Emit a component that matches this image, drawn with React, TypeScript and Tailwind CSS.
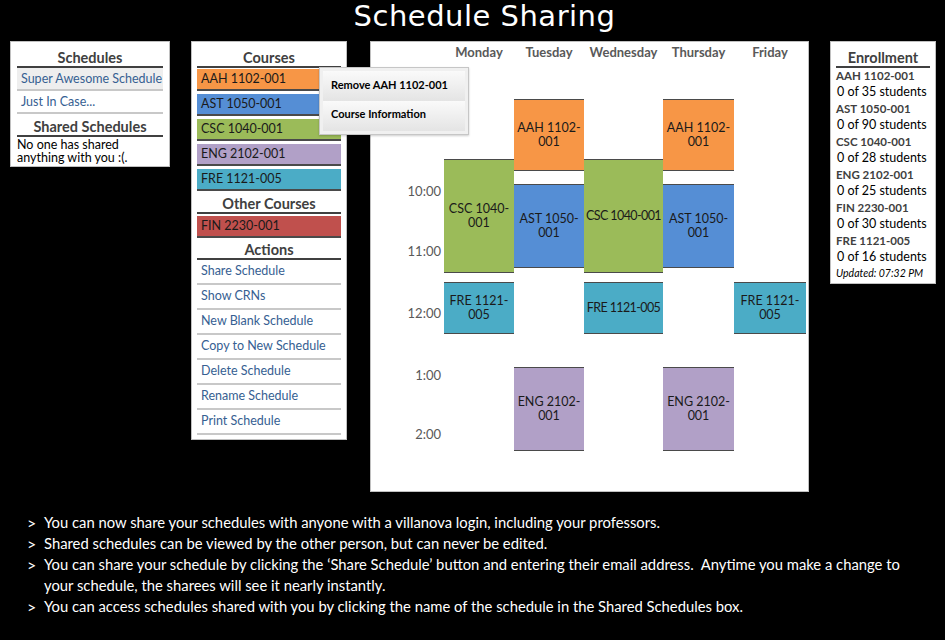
import React from 'react'

const font = { fontFamily: 'Lato, "Open Sans", sans-serif' }

const courses = [
  { code: 'AAH 1102-001', bg: 'bg-[#f79646]' },
  { code: 'AST 1050-001', bg: 'bg-[#558ed5]' },
  { code: 'CSC 1040-001', bg: 'bg-[#9bbb59]' },
  { code: 'ENG 2102-001', bg: 'bg-[#b1a0c7]' },
  { code: 'FRE 1121-005', bg: 'bg-[#4bacc6]' },
]

const actions = [
  'Share Schedule',
  'Show CRNs',
  'New Blank Schedule',
  'Copy to New Schedule',
  'Delete Schedule',
  'Rename Schedule',
  'Print Schedule',
]

const enrollment = [
  ['AAH 1102-001', '0 of 35 students'],
  ['AST 1050-001', '0 of 90 students'],
  ['CSC 1040-001', '0 of 28 students'],
  ['ENG 2102-001', '0 of 25 students'],
  ['FIN 2230-001', '0 of 30 students'],
  ['FRE 1121-005', '0 of 16 students'],
]

// column x (relative to calendar box) and widths
const cols = [
  { left: 73, width: 70 },
  { left: 143, width: 70 },
  { left: 213, width: 79 },
  { left: 292, width: 71 },
  { left: 363, width: 72 },
]

const events = [
  { col: 1, top: 57, h: 72, label: 'AAH 1102-\n001', bg: 'bg-[#f79646]' },
  { col: 3, top: 57, h: 72, label: 'AAH 1102-\n001', bg: 'bg-[#f79646]' },
  { col: 0, top: 117, h: 114, label: 'CSC 1040-\n001', bg: 'bg-[#9bbb59]' },
  { col: 2, top: 117, h: 114, label: 'CSC 1040-001', bg: 'bg-[#9bbb59]', tight: true },
  { col: 1, top: 142, h: 84, label: 'AST 1050-\n001', bg: 'bg-[#558ed5]' },
  { col: 3, top: 142, h: 84, label: 'AST 1050-\n001', bg: 'bg-[#558ed5]' },
  { col: 0, top: 240, h: 52, label: 'FRE 1121-\n005', bg: 'bg-[#4bacc6]' },
  { col: 2, top: 240, h: 52, label: 'FRE 1121-005', bg: 'bg-[#4bacc6]', tight: true },
  { col: 4, top: 240, h: 52, label: 'FRE 1121-\n005', bg: 'bg-[#4bacc6]' },
  { col: 1, top: 325, h: 84, label: 'ENG 2102-\n001', bg: 'bg-[#b1a0c7]' },
  { col: 3, top: 325, h: 84, label: 'ENG 2102-\n001', bg: 'bg-[#b1a0c7]' },
]

const days = ['Monday', 'Tuesday', 'Wednesday', 'Thursday', 'Friday']
const times: [string, number][] = [
  ['10:00', 150],
  ['11:00', 210],
  ['12:00', 272],
  ['1:00', 334],
  ['2:00', 393],
]

function Header({ children }: { children: React.ReactNode }) {
  return (
    <div className="border-b-2 border-[#404040] text-center text-[14.5px] font-bold leading-[16px] text-[#404040]">
      {children}
    </div>
  )
}

export default function App() {
  return (
    <div className="h-[640px] w-[945px] bg-black" style={font}>
      <div
        className="h-[41px] pl-[24px] text-center text-[29px] leading-[32px] text-white"
        style={{ fontFamily: '"DejaVu Sans", sans-serif', letterSpacing: '0.5px' }}
      >
        Schedule Sharing
      </div>

      <div className="flex items-start pl-[10px]">
        {/* Schedules */}
        <div className="w-[160px] border border-[#c0c0c0] bg-white px-[6px] pt-[8px] pb-[2px]">
          <Header>Schedules</Header>
          <div className="h-[23px] border-b-2 border-[#c8c8c8] bg-[#eeeeee] pl-[4px] text-[12.5px] leading-[21px] text-[#366092]">
            Super Awesome Schedule
          </div>
          <div className="h-[23px] border-b-2 border-[#c8c8c8] pl-[4px] text-[12.5px] leading-[21px] text-[#366092]">
            Just In Case...
          </div>
          <div className="pt-[5px]">
            <Header>Shared Schedules</Header>
          </div>
          <div className="pt-[1px] text-[12.5px] leading-[13px] text-black">
            No one has shared anything with you :(.
          </div>
        </div>

        {/* Courses */}
        <div className="relative ml-[21px] w-[156px] border border-[#c0c0c0] bg-white px-[5px] pt-[8px] pb-[4px]">
          <Header>Courses</Header>
          <div className="mt-[1px] flex flex-col gap-[3px]">
            {courses.map((c) => (
              <div
                key={c.code}
                className={`h-[22px] border-b-2 border-[#4a4a4a] pl-[4px] text-[12.5px] leading-[20px] text-[#1a1a1a] ${c.bg}`}
              >
                {c.code}
              </div>
            ))}
          </div>
          <div className="pt-[5px]">
            <Header>Other Courses</Header>
          </div>
          <div className="mt-[2px] h-[22px] border-b-2 border-[#4a4a4a] bg-[#c0504d] pl-[4px] text-[12.5px] leading-[20px] text-[#1a1a1a]">
            FIN 2230-001
          </div>
          <div className="pt-[4px]">
            <Header>Actions</Header>
          </div>
          <div className="flex flex-col">
            {actions.map((a) => (
              <div
                key={a}
                className="h-[25px] border-b-2 border-[#c8c8c8] pl-[4px] text-[12.5px] leading-[21px] text-[#366092]"
              >
                {a}
              </div>
            ))}
          </div>

          {/* context menu */}
          <div className="absolute top-[25px] left-[127px] z-10 w-[150px] border border-[#c6c6c6] bg-[#f0f0f0] p-[3px] shadow-[0_1px_2px_rgba(0,0,0,0.2)]">
            <div className="h-[30px] bg-gradient-to-b from-[#fafafa] to-[#e4e4e4] pl-[8px] text-[11px] font-bold leading-[28px] text-black">
              Remove AAH 1102-001
            </div>
            <div className="h-[30px] bg-gradient-to-b from-[#fafafa] to-[#e4e4e4] pl-[8px] text-[11px] font-bold leading-[26px] text-black">
              Course Information
            </div>
          </div>
        </div>

        {/* Calendar */}
        <div className="relative ml-[23px] h-[451px] w-[439px] border border-[#c0c0c0] bg-white">
          {days.map((d, i) => (
            <div
              key={d}
              className="absolute top-[1px] text-center text-[13px] font-bold text-[#595959]"
              style={{ left: cols[i].left, width: cols[i].width }}
            >
              {d}
            </div>
          ))}
          {times.map(([t, y]) => (
            <div
              key={t}
              className="absolute left-[0px] w-[70px] text-right text-[13px] leading-[16px] text-[#595959]"
              style={{ top: y - 9 }}
            >
              {t}
            </div>
          ))}
          {events.map((e, i) => (
            <div
              key={i}
              className={`absolute flex items-center justify-center border-y border-[#4a4a4a] text-center text-[12.5px] leading-[14px] whitespace-pre text-[#1a1a1a] ${e.bg} ${
                e.tight ? 'tracking-[-0.6px]' : ''
              }`}
              style={{ left: cols[e.col].left, width: cols[e.col].width, top: e.top, height: e.h }}
            >
              {e.label}
            </div>
          ))}
        </div>

        {/* Enrollment */}
        <div className="ml-[21px] w-[106px] border border-[#c0c0c0] bg-white px-[5px] pt-[8px] pb-[2px]">
          <Header>Enrollment</Header>
          <div>
            {enrollment.map(([c, s]) => (
              <div key={c}>
                <div className="text-[11.5px] leading-[15px] font-bold text-[#404040]">{c}</div>
                <div className="pl-[1px] text-[12.5px] leading-[18px] text-black">{s}</div>
              </div>
            ))}
            <div className="text-[10.5px] leading-[15px] italic text-black">Updated: 07:32 PM</div>
          </div>
        </div>
      </div>

      {/* Notes */}
      <div className="mt-[20px] pl-[27px] pr-[20px] text-[14.8px] leading-[21px] text-white">
        {[
          'You can now share your schedules with anyone with a villanova login, including your professors.',
          'Shared schedules can be viewed by the other person, but can never be edited.',
          'You can share your schedule by clicking the ‘Share Schedule’ button and entering their email address.  Anytime you make a change to your schedule, the sharees will see it nearly instantly.',
          'You can access schedules shared with you by clicking the name of the schedule in the Shared Schedules box.',
        ].map((t) => (
          <div key={t} className="flex">
            <span className="w-[17px] shrink-0 text-[16px]">&gt;</span>
            <span className="whitespace-pre-wrap">{t}</span>
          </div>
        ))}
      </div>
    </div>
  )
}
